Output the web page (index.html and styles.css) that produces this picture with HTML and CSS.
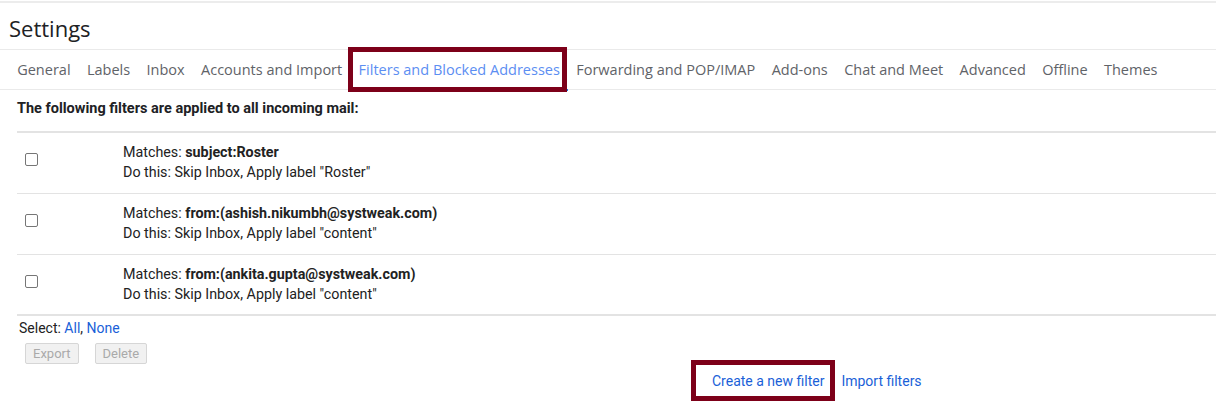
FILE: index.html
```html
<!DOCTYPE html>
<html>
<head>
<meta charset="utf-8">
<link rel="stylesheet" href="styles.css">
</head>
<body>
<div class="page">
  <div class="topline"></div>
  <h1 class="title">Settings</h1>
  <nav class="tabs">
    <span class="tab">General</span>
    <span class="tab">Labels</span>
    <span class="tab">Inbox</span>
    <span class="tab">Accounts and Import</span>
    <span class="tab active">Filters and Blocked Addresses<span class="mark mark-tab"></span></span>
    <span class="tab">Forwarding and POP/IMAP</span>
    <span class="tab">Add-ons</span>
    <span class="tab">Chat and Meet</span>
    <span class="tab">Advanced</span>
    <span class="tab">Offline</span>
    <span class="tab">Themes</span>
  </nav>
  <div class="content">
    <div class="heading">The following filters are applied to all incoming mail:</div>
    <div class="filters">
      <div class="row">
        <div class="cb-cell"><span class="cb"></span></div>
        <div class="desc">
          <div>Matches: <b>subject:Roster</b></div>
          <div>Do this: Skip Inbox, Apply label "Roster"</div>
        </div>
      </div>
      <div class="row">
        <div class="cb-cell"><span class="cb"></span></div>
        <div class="desc">
          <div>Matches: <b>from:(ashish.nikumbh@systweak.com)</b></div>
          <div>Do this: Skip Inbox, Apply label "content"</div>
        </div>
      </div>
      <div class="row">
        <div class="cb-cell"><span class="cb"></span></div>
        <div class="desc">
          <div>Matches: <b>from:(ankita.gupta@systweak.com)</b></div>
          <div>Do this: Skip Inbox, Apply label "content"</div>
        </div>
      </div>
    </div>
    <div class="select">Select: <span class="link">All</span>, <span class="link">None</span></div>
    <div class="buttons">
      <span class="btn">Export</span>
      <span class="btn">Delete</span>
    </div>
    <div class="actions">
      <span class="link create">Create a new filter<span class="mark mark-create"></span></span>
      <span class="link">Import filters</span>
    </div>
  </div>
</div>
</body>
</html>
```

FILE: styles.css
```css
* { box-sizing: border-box; }
html, body { margin: 0; padding: 0; background: #fff; }
body { width: 1216px; height: 409px; overflow: hidden; font-family: Roboto, "Liberation Sans", sans-serif; color: #222; }
.page { width: 1216px; }
.topline { height: 2px; margin-top: 1px; background: #ececec; }
.title {
  margin: 0; height: 47px; padding: 10px 0 0 9px;
  font-family: "Open Sans", "Noto Sans", sans-serif; font-weight: 400;
  font-size: 22px; line-height: 30px; color: #202124;
  border-bottom: 1px solid #eaeaea;
}
.tabs {
  display: flex; height: 40px; align-items: center;
  padding-left: 9px;
  border-bottom: 1px solid #eaeaea;
  font-family: "Open Sans", "Noto Sans", sans-serif; font-size: 14.5px; color: #5f6368;
}
.tab { position: relative; padding: 0 8.2px; line-height: 40px; white-space: nowrap; }
.tab.active { color: #5c8ef2; }
.tab.active::after {
  content: ""; position: absolute; left: 0; right: 0; bottom: -1px; height: 2px; background: #1a73e8;
}
.mark { position: absolute; border: 5px solid #7d0019; pointer-events: none; }
.mark-tab { left: -2px; right: 1px; top: -3px; bottom: -2px; z-index: 2; }
.content { padding-left: 17px; font-size: 14px; }
.heading { font-weight: 700; font-size: 14.5px; height: 41px; line-height: 38px; color: #202124; }
.filters { border-top: 2px solid #e3e3e3; }
.row { display: flex; height: 61px; border-bottom: 1px solid #e3e3e3; }
.row:last-child { border-bottom: 2px solid #e3e3e3; }
.cb-cell { width: 106px; padding: 20px 0 0 8px; }
.cb { display: block; width: 13px; height: 13px; border: 1px solid #767676; border-radius: 2px; background: #fff; }
.desc { padding-top: 9px; line-height: 20px; font-size: 14.3px; color: #222; }
.desc b { font-weight: 700; }
.select { padding: 2px 0 0 2px; line-height: 20px; font-size: 14px; color: #222; }
.link { color: #1a5fd8; }
.buttons { display: flex; gap: 16px; padding: 5px 0 0 8px; }
.btn {
  display: inline-block; height: 21px; padding: 0 7px; line-height: 19px;
  font-size: 13px; color: #aaa; background: #f1f1f1;
  border: 1px solid #d6d6d6; border-radius: 2px;
}
.actions { display: flex; gap: 17px; padding: 7px 0 0 695px; line-height: 20px; font-size: 14px; }
.create { position: relative; }
.mark-create { left: -21px; right: -11px; top: -11px; bottom: -10px; }
```
